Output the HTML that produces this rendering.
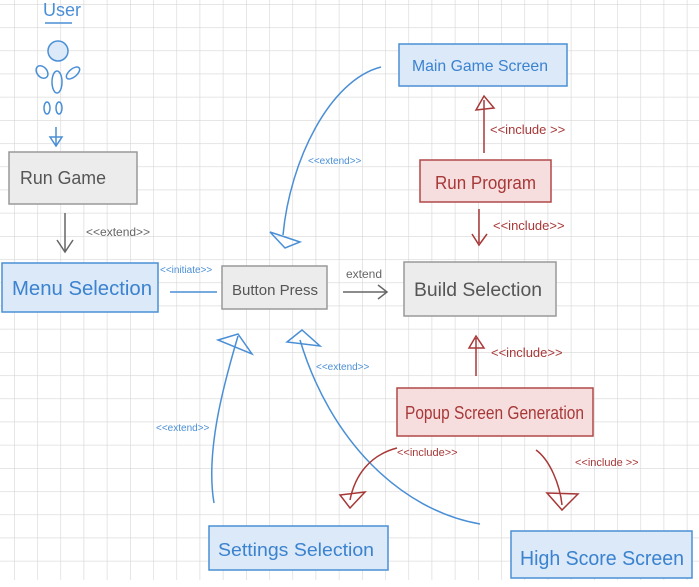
<!DOCTYPE html>
<html><head><style>
html,body{margin:0;padding:0;background:#fff}
svg{display:block}
text{font-family:"Liberation Sans",sans-serif}
</style></head><body>
<svg width="699" height="587" viewBox="0 0 699 587" xmlns="http://www.w3.org/2000/svg">
<defs>
<pattern id="g" x="14" y="4" width="23.2" height="23.2" patternUnits="userSpaceOnUse">
<path d="M0 0V23.2M0 0H23.2" stroke="#d6d6d6" stroke-width="1.2" fill="none"/>
</pattern>
</defs>
<rect width="699" height="580" fill="url(#g)"/>
<rect y="580" width="699" height="7" fill="#fff"/>

<!-- user -->
<text x="43" y="16" font-size="18" fill="#4a8fd6">User</text>
<line x1="45" y1="23" x2="72" y2="23" stroke="#4a8fd6" stroke-width="1.5"/>
<circle cx="58" cy="51" r="10" fill="#dbe9f8" stroke="#4a8fd6" stroke-width="1.5"/>
<ellipse cx="42" cy="72" rx="5" ry="7" transform="rotate(-40 42 72)" fill="none" stroke="#4a8fd6" stroke-width="1.5"/>
<ellipse cx="73" cy="73" rx="4" ry="8" transform="rotate(50 73 73)" fill="none" stroke="#4a8fd6" stroke-width="1.5"/>
<ellipse cx="57" cy="82" rx="5" ry="11" fill="none" stroke="#4a8fd6" stroke-width="1.5"/>
<ellipse cx="47" cy="108" rx="3" ry="6" fill="none" stroke="#4a8fd6" stroke-width="1.5"/>
<ellipse cx="59" cy="108" rx="3" ry="6" fill="none" stroke="#4a8fd6" stroke-width="1.5"/>
<path d="M56 127V146M50 137L56 146L62 137Z" fill="none" stroke="#4a8fd6" stroke-width="1.5"/>

<!-- boxes -->
<g stroke-width="1.5">
<rect x="9" y="152" width="128" height="52" fill="#ececec" stroke="#999"/>
<rect x="2" y="263" width="156" height="49" fill="#dbe9f8" stroke="#4a8fd6"/>
<rect x="222" y="266" width="105" height="43" fill="#ececec" stroke="#999"/>
<rect x="404" y="262" width="152" height="54" fill="#ececec" stroke="#999"/>
<rect x="399" y="44" width="168" height="42" fill="#dbe9f8" stroke="#4a8fd6"/>
<rect x="420" y="160" width="131" height="42" fill="#f6dede" stroke="#b04848"/>
<rect x="397" y="388" width="196" height="48" fill="#f6dede" stroke="#b04848"/>
<rect x="209" y="526" width="179" height="44" fill="#dbe9f8" stroke="#4a8fd6"/>
<rect x="511" y="531" width="181" height="47" fill="#dbe9f8" stroke="#4a8fd6"/>
</g>
<g font-size="18">
<text x="20" y="184" fill="#555" textLength="86" lengthAdjust="spacingAndGlyphs">Run  Game</text>
<text x="12" y="295" fill="#3b82cf" font-size="20" textLength="140" lengthAdjust="spacingAndGlyphs">Menu  Selection</text>
<text x="232" y="295" fill="#555" font-size="15" textLength="86" lengthAdjust="spacingAndGlyphs">Button Press</text>
<text x="414" y="296" fill="#555" font-size="19" textLength="128" lengthAdjust="spacingAndGlyphs">Build  Selection</text>
<text x="412" y="71" fill="#3b82cf" font-size="16" textLength="136" lengthAdjust="spacingAndGlyphs">Main  Game  Screen</text>
<text x="435" y="189" fill="#a83838" textLength="101" lengthAdjust="spacingAndGlyphs">Run  Program</text>
<text x="405" y="419" fill="#a83838" textLength="179" lengthAdjust="spacingAndGlyphs">Popup  Screen  Generation</text>
<text x="218" y="556" fill="#3b82cf" textLength="156" lengthAdjust="spacingAndGlyphs">Settings  Selection</text>
<text x="520" y="565" fill="#3b82cf" font-size="20" textLength="164" lengthAdjust="spacingAndGlyphs">High  Score  Screen</text>
</g>

<!-- gray arrows -->
<g stroke="#666" stroke-width="1.5" fill="none">
<path d="M65 213V252M57 240L65 252L73 240"/>
<path d="M343 292H386M378 285L387 292L378 299"/>
</g>
<text x="86" y="236" font-size="12" fill="#666">&lt;&lt;extend&gt;&gt;</text>
<text x="346" y="278" font-size="12" fill="#666">extend</text>
<line x1="170" y1="292" x2="217" y2="292" stroke="#4a8fd6" stroke-width="1.5"/>
<text x="160" y="273" font-size="10" fill="#4a8fd6">&lt;&lt;initiate&gt;&gt;</text>

<!-- blue arrows -->
<g stroke="#4a8fd6" stroke-width="1.5" fill="none">
<path d="M381 67C330 80 290 160 283 235"/>
<path d="M270 232L300 242L285 248Z"/>
<path d="M214 503C205 450 225 380 238 336"/>
<path d="M218 340L238 334L252 354Z"/>
<path d="M480 524C400 510 330 440 300 340"/>
<path d="M287 342L302 330L320 346Z"/>
</g>
<g font-size="10" fill="#4a8fd6">
<text x="308" y="164">&lt;&lt;extend&gt;&gt;</text>
<text x="156" y="431">&lt;&lt;extend&gt;&gt;</text>
<text x="316" y="370">&lt;&lt;extend&gt;&gt;</text>
</g>

<!-- red arrows -->
<g stroke="#a83838" stroke-width="1.5" fill="none">
<path d="M484 153V100M476 110L484 96L494 108Z"/>
<path d="M479 209V243M472 234L479 245L487 234"/>
<path d="M476 376V338M469 348L476 336L484 348Z"/>
<path d="M397 448C370 455 355 475 350 500M340 495L365 492L350 508Z"/>
<path d="M536 450C550 460 560 485 562 505M547 493L578 494L562 510Z"/>
</g>
<g font-size="13" fill="#a83838">
<text x="490" y="134">&lt;&lt;include &gt;&gt;</text>
<text x="493" y="230">&lt;&lt;include&gt;&gt;</text>
<text x="491" y="357">&lt;&lt;include&gt;&gt;</text>
<text x="397" y="456" font-size="11">&lt;&lt;include&gt;&gt;</text>
<text x="575" y="466" font-size="11">&lt;&lt;include &gt;&gt;</text>
</g>
</svg>
</body></html>
